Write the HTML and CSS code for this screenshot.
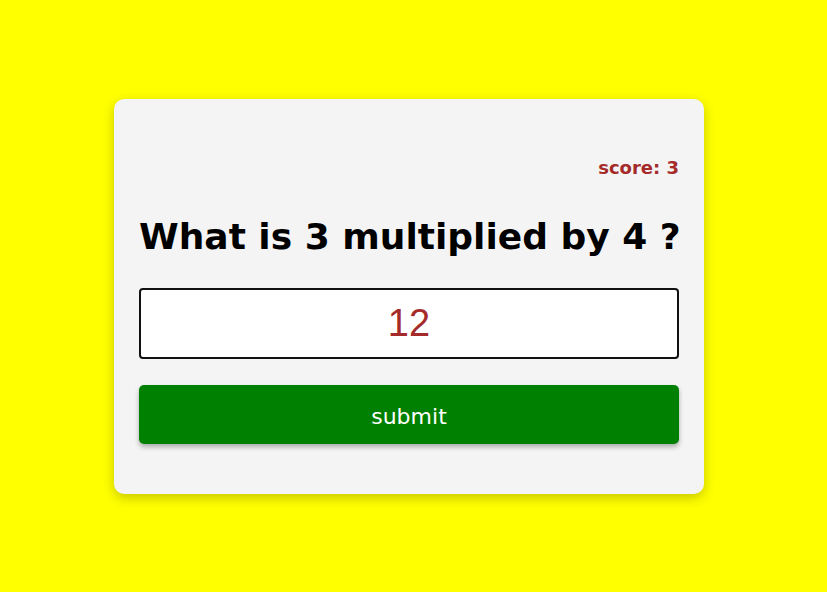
FILE: index.html
```html
<!DOCTYPE html>
<html lang="en">
<head>
<meta charset="utf-8">
<title>Multiplication quiz</title>
<link rel="stylesheet" href="styles.css">
</head>
<body>
<main class="page">
  <section class="card">
    <p class="score">score: 3</p>
    <h1 class="question">What is 3 multiplied by 4 ?</h1>
    <input class="answer" type="text" value="12" autofocus>
    <button class="submit" type="button">submit</button>
  </section>
</main>
</body>
</html>
```
FILE: styles.css
```css
html, body {
  margin: 0;
  padding: 0;
}
body {
  background: #ffff00;
  font-family: "DejaVu Sans", "Noto Sans", sans-serif;
}
.page {
  height: 100vh;
  display: flex;
  align-items: center;
  justify-content: center;
}
.card {
  box-sizing: border-box;
  width: 590px;
  margin-right: 9px;
  padding: 59px 25px 50px;
  background: #f4f4f4;
  border-radius: 10px;
  box-shadow: 0 4px 12px rgba(0, 0, 0, 0.22);
  display: flex;
  flex-direction: column;
}
.score {
  margin: 0;
  text-align: right;
  color: #a52a2a;
  font-weight: bold;
  font-size: 18px;
  line-height: 20px;
}
.question {
  margin: 37px 0 0;
  text-align: center;
  font-size: 36px;
  line-height: 44px;
  font-weight: bold;
  color: #000;
  white-space: nowrap;
}
.answer {
  box-sizing: border-box;
  margin-top: 29px;
  height: 71px;
  width: 100%;
  border: 2px solid #111;
  border-radius: 4px;
  background: #fff;
  text-align: center;
  font-family: "Liberation Sans", Arial, sans-serif;
  font-size: 38px;
  color: #a52a2a;
  caret-color: #a52a2a;
  outline: none;
  padding: 0 10px;
}
.submit {
  margin-top: 26px;
  height: 59px;
  width: 100%;
  border: none;
  border-radius: 5px;
  background: #008000;
  color: #fff;
  font-family: "DejaVu Sans", "Noto Sans", sans-serif;
  font-size: 22px;
  padding: 5px 0 0;
  box-shadow: 0 3px 5px rgba(0, 0, 0, 0.3);
  cursor: pointer;
}
```
